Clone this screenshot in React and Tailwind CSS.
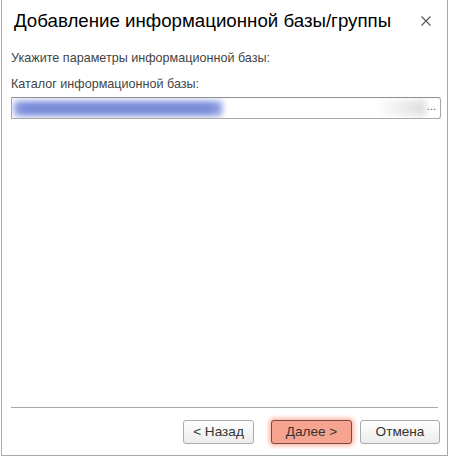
export default function App() {
  return (
    <div className="w-[450px] h-[458px] bg-white relative overflow-hidden">
      <div className="ml-[1px] w-[447px] h-[456px] border-l border-r border-b border-[#a8a8a8] bg-white flex flex-col font-['Liberation_Sans',Arial,sans-serif]">
        <div className="h-[42px] flex items-center justify-between pl-[12px] pr-[14px]">
          <div className="text-[18.7px] text-black leading-none">Добавление информационной базы/группы</div>
          <svg width="12" height="12" viewBox="0 0 12 12" className="mr-[1px]">
            <path d="M1.5 1.5 L10.5 10.5 M10.5 1.5 L1.5 10.5" stroke="#555" strokeWidth="1.1" />
          </svg>
        </div>
        <div className="px-[9px] text-[12.6px] text-[#444] leading-none">
          <div className="mt-[10px]">Укажите параметры информационной базы:</div>
          <div className="mt-[13px]">Каталог информационной базы:</div>
          <div className="mt-[7px] h-[22px] w-[430px] border border-[#a8a8a8] border-t-[#8e8e8e] rounded-r-[3px] relative overflow-hidden flex items-center">
            <div className="absolute left-[2px] top-[2px] w-[412px] h-[16px] bg-gradient-to-r from-white from-[88%] to-[#dcdcdc] blur-[3px]" />
            <div className="absolute left-[2px] top-[3px] w-[208px] h-[15px] bg-[#8a9be0] blur-[3px]" />
            <div className="absolute left-[10px] top-[7px] w-[190px] h-[7px] bg-[#7387d6] blur-[3px]" />
            <div className="absolute right-[4px] top-[3px] text-[11px] text-[#555]">...</div>
          </div>
        </div>
        <div className="flex-1" />
        <div className="mx-[9px] h-px bg-[#a8a8a8]" />
        <div className="flex justify-end px-[7px] pt-[12px] pb-[11px]">
          <button className="w-[71px] h-[24px] rounded-[3px] border border-[#ababab] bg-gradient-to-b from-white to-[#ececec] text-[13.6px] text-[#333] leading-none">&lt; Назад</button>
          <button className="ml-[17px] w-[81px] h-[24px] rounded-[3px] border border-[#7a4a3e] bg-[#f6a48f] text-[13.6px] text-[#333] leading-none shadow-[0_0_4px_2px_rgba(245,150,125,0.7)]">Далее &gt;</button>
          <button className="ml-[8px] w-[80px] h-[24px] rounded-[3px] border border-[#ababab] bg-gradient-to-b from-white to-[#ececec] text-[13.6px] text-[#333] leading-none">Отмена</button>
        </div>
      </div>
    </div>
  );
}
